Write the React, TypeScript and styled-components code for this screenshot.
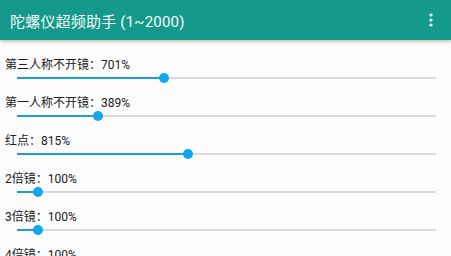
import styled, { createGlobalStyle } from "styled-components";

const GlobalStyle = createGlobalStyle`
    html, body {
        margin: 0;
        padding: 0;
        background: #fcfcfc;
        overflow: hidden;
    }
    body {
        font-family: "Roboto", "Noto Sans CJK SC", sans-serif;
    }
`

const Page = styled.div`
    width: 451px;
    height: 256px;
    display: flex;
    flex-direction: column;
    background: #fcfcfc;
`

const AppBar = styled.div`
    height: 40px;
    flex-shrink: 0;
    display: flex;
    align-items: center;
    justify-content: space-between;
    padding: 0 12px 0 10px;
    background: #14998a;
    box-shadow: 0 2px 3px rgba(0, 0, 0, 0.22);
    position: relative;
    z-index: 1;
`

const Title = styled.div`
    color: #f4fbfa;
    font-size: 15px;
    font-weight: 400;
    letter-spacing: 0.2px;
`

const MenuButton = styled.div`
    width: 16px;
    height: 24px;
    display: flex;
    align-items: center;
    justify-content: center;
`

const List = styled.div`
    display: flex;
    flex-direction: column;
    padding-top: 17px;
    gap: 12px;
`

const Row = styled.div`
    display: flex;
    flex-direction: column;
`

const Label = styled.div`
    height: 16px;
    line-height: 16px;
    padding-left: 5px;
    font-size: 12px;
    color: #202020;
`

const Slider = styled.div`
    height: 10px;
    margin: 0 15px 0 17px;
    display: flex;
    align-items: center;
`

const Active = styled.div`
    height: 2px;
    background: #1f9fd8;
`

const Thumb = styled.div`
    width: 10px;
    height: 10px;
    margin: 0 -5px;
    border-radius: 50%;
    background: #11a6ee;
    position: relative;
    z-index: 1;
    flex-shrink: 0;
`

const Rest = styled.div`
    flex: 1;
    height: 2px;
    background: #d9d9d9;
`

const TRACK = 419;
const MAX = 2000;

const items = [
    { name: "第三人称不开镜", value: 701 },
    { name: "第一人称不开镜", value: 389 },
    { name: "红点", value: 815 },
    { name: "2倍镜", value: 100 },
    { name: "3倍镜", value: 100 },
    { name: "4倍镜", value: 100 },
]

function App() {
    return (
        <Page>
            <GlobalStyle />
            <AppBar>
                <Title>陀螺仪超频助手 (1~2000)</Title>
                <MenuButton>
                    <svg width="4" height="14" viewBox="0 0 4 14">
                        <circle cx="2" cy="2" r="1.6" fill="#f4fbfa" />
                        <circle cx="2" cy="7" r="1.6" fill="#f4fbfa" />
                        <circle cx="2" cy="12" r="1.6" fill="#f4fbfa" />
                    </svg>
                </MenuButton>
            </AppBar>
            <List>
                {items.map((it) => (
                    <Row key={it.name}>
                        <Label>{it.name}：{it.value}%</Label>
                        <Slider>
                            <Active style={{ width: Math.round((it.value / MAX) * TRACK) }} />
                            <Thumb />
                            <Rest />
                        </Slider>
                    </Row>
                ))}
            </List>
        </Page>
    )
}

export default App;
